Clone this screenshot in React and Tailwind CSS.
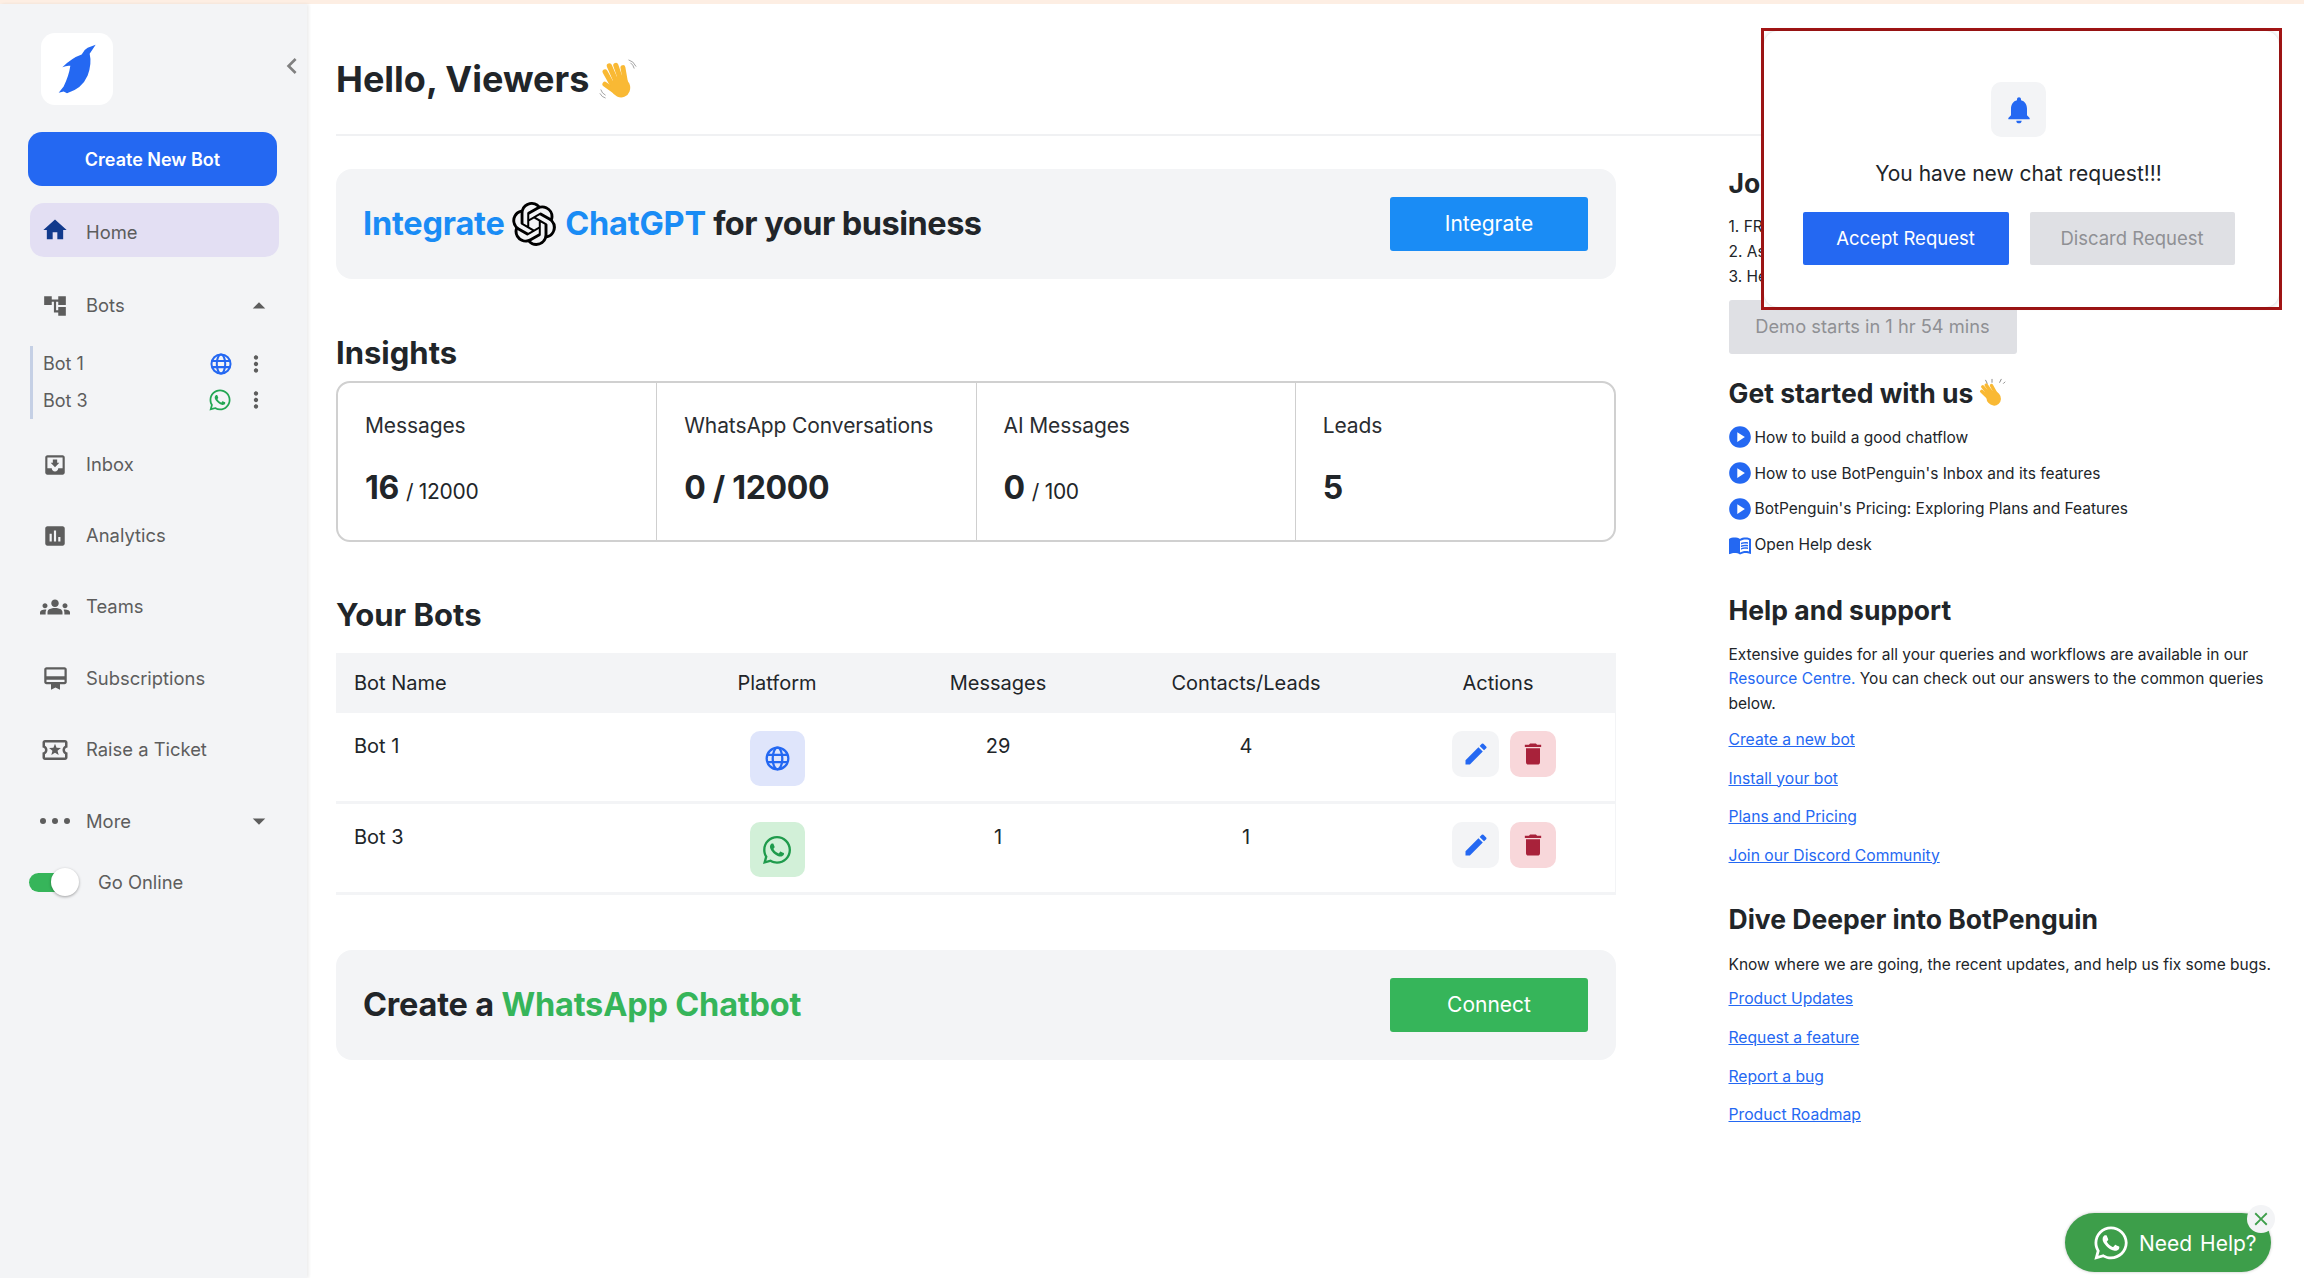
import React from "react";
import { MdHome, MdAccountTree, MdMoveToInbox, MdAssessment, MdGroups, MdCardMembership, MdOutlineLocalActivity, MdArrowDropUp, MdArrowDropDown, MdChevronLeft, MdMoreVert, MdEdit, MdDelete, MdNotifications, MdPlayCircle, MdMenuBook, MdClose } from "react-icons/md";
import { FaWhatsapp } from "react-icons/fa";
import { SiOpenai } from "react-icons/si";

function Globe({ className }) {
  return (
    <svg viewBox="0 0 24 24" fill="none" stroke="currentColor" strokeWidth="2.2" className={className}>
      <circle cx="12" cy="12" r="10.4" />
      <ellipse cx="12" cy="12" rx="4.6" ry="10.4" />
      <path d="M2 8.6 H22 M2 15.4 H22" />
    </svg>
  );
}

function Wave({ className }) {
  return (
    <svg viewBox="0 0 40 44" className={className}>
      <g transform="rotate(-22 20 24)" stroke="#f9b934" strokeLinecap="round" fill="none">
        <path d="M11 10 L13 26" strokeWidth="5.2" />
        <path d="M17.5 6 L18 26" strokeWidth="5.4" />
        <path d="M24 8 L23 26" strokeWidth="5.4" />
        <path d="M30 13 L27 27" strokeWidth="5.2" />
        <path d="M6 22 L13 33" strokeWidth="5.2" />
        <ellipse cx="20" cy="31" rx="10" ry="11" fill="#f9b934" strokeWidth="0" />
      </g>
      <path d="M33 5 Q36 7 37 11 M31 2 Q36 3 39 9 M2 33 Q3 37 7 39 M1 37 Q3 41 7 42" stroke="#888" strokeWidth="0.8" fill="none" />
    </svg>
  );
}

function Clap({ className }) {
  return (
    <svg viewBox="0 0 30 32" className={className}>
      <g transform="rotate(-40 15 18)" stroke="#f9b934" strokeLinecap="round" fill="none">
        <path d="M9 8 L10 18 M13 5 L13 18 M17 6 L16 18 M21 10 L19 20" strokeWidth="3.6" />
        <ellipse cx="14" cy="22" rx="7.5" ry="8" fill="#f9b934" strokeWidth="0" />
      </g>
      <path d="M10 6 L8 2 M15 5 L15 1 M23 5 L25 1 M27 6 L29 4" stroke="#777" strokeWidth="0.9" fill="none" />
    </svg>
  );
}

function NavItem({ icon, label, caret, mt = "mt-[19.4px]" }) {
  return (
    <div className={`flex items-center h-[52px] ${mt} pl-[12px] pr-[14px] ml-[28px] mr-[28px] text-[18.4px] text-[#5d5d5d]`}>
      <span className="w-[30px] flex justify-center text-[#5d5d5d] shrink-0">{icon}</span>
      <span className="ml-[16px] flex-1">{label}</span>
      {caret}
    </div>
  );
}

function SubBot({ name, icon }) {
  return (
    <div className="flex items-center h-[36.5px] pl-[10px]">
      <span className="text-[18px] text-[#5d5d5d] flex-1">{name}</span>
      {icon}
      <MdMoreVert className="text-[26px] text-[#5d5d5d] ml-[11px] mr-[10px]" />
    </div>
  );
}

function Sidebar() {
  return (
    <aside className="relative w-[307px] shrink-0 bg-[#f3f4f6] shadow-[2px_0_3px_rgba(0,0,0,0.07)] flex flex-col">
      <div className="pl-[41px] pt-[29px]">
        <div className="w-[72px] h-[72px] bg-white rounded-[14px] flex items-center justify-center">
          <svg viewBox="170 128 120 155" className="w-[40px] h-[52px]">
            <path fill="#2468f2" d="M286 133 L262 142 Q250 148 244 162 Q215 172 186 200 Q200 194 210 196 Q206 225 190 258 L175 277 L190 273 L200 278 Q245 265 262 225 Q275 190 268 160 Z" />
          </svg>
        </div>
      </div>
      <MdChevronLeft className="absolute left-[276px] top-[46px] text-[32px] text-[#808080]" />
      <button className="mt-[27px] ml-[28px] w-[249px] h-[54px] rounded-[14px] bg-[#2468f2] text-white text-[18px] font-semibold">Create New Bot</button>
      <div className="mt-[17px] ml-[30px] w-[249px] h-[54px] rounded-[14px] bg-[#e3dff3] flex items-center pl-[10px] text-[18.4px] text-[#5d5d5d]">
        <span className="w-[30px] flex justify-center"><MdHome className="text-[28px] text-[#123a8c]" /></span>
        <span className="ml-[16px] pt-[5px]">Home</span>
      </div>
      <NavItem mt="mt-[23px]" icon={<MdAccountTree className="text-[26px]" />} label="Bots" caret={<MdArrowDropUp className="text-[30px] -mr-[9px]" />} />
      <div className="ml-[30px] w-[249px] mt-[13.5px] border-l-[3px] border-[#c5d0e5]">
        <SubBot name="Bot 1" icon={<Globe className="w-[22px] h-[22px] text-[#2468f2]" />} />
        <SubBot name="Bot 3" icon={<FaWhatsapp className="text-[24px] text-[#22a652]" />} />
      </div>
      <NavItem mt="mt-[20px]" icon={<MdMoveToInbox className="text-[26px]" />} label="Inbox" />
      <NavItem icon={<MdAssessment className="text-[26px]" />} label="Analytics" />
      <NavItem icon={<MdGroups className="text-[30px]" />} label="Teams" />
      <NavItem icon={<MdCardMembership className="text-[27px]" />} label="Subscriptions" />
      <NavItem icon={<MdOutlineLocalActivity className="text-[30px]" />} label="Raise a Ticket" />
      <NavItem
        icon={<span className="flex gap-[6px]"><i className="w-[6px] h-[6px] rounded-full bg-[#5d5d5d]" /><i className="w-[6px] h-[6px] rounded-full bg-[#5d5d5d]" /><i className="w-[6px] h-[6px] rounded-full bg-[#5d5d5d]" /></span>}
        label="More"
        caret={<MdArrowDropDown className="text-[30px] -mr-[9px]" />}
      />
      <div className="flex items-center ml-[29px] mt-[20px] h-[30px]">
        <div className="relative w-[48px] h-[19px] rounded-full bg-[#36b55a]">
          <span className="absolute left-[22px] -top-[5px] w-[28px] h-[28px] rounded-full bg-white shadow-[0_1px_3px_rgba(0,0,0,0.35)]" />
        </div>
        <span className="ml-[21px] text-[18.4px] text-[#5d5d5d]">Go Online</span>
      </div>
    </aside>
  );
}

function Stat({ label, big, small, last }) {
  return (
    <div className={`flex-1 pl-[27px] pt-[28px] ${last ? "" : "border-r border-[#cfcfcf]"}`}>
      <div className="text-[21px] text-[#2a2d31] leading-[30px] tracking-[-0.1px]">{label}</div>
      <div className="mt-[27px] leading-[40px] text-[#212529]">
        <span className="text-[32px] font-bold tracking-[-0.3px]">{big}</span>
        {small && <span className="text-[21px] ml-[7px] tracking-[-0.3px]">{small}</span>}
      </div>
    </div>
  );
}

function BotRow({ name, tile, msgs, leads }) {
  const cell = "flex justify-center pt-[18px] text-[20px] text-[#212529] leading-[30px]";
  return (
    <div className="grid grid-cols-[334px_214px_228px_268px_236px] h-[91px] border-b-[3px] border-r border-[#f3f4f6]">
      <div className="pl-[18px] pt-[18px] text-[20px] text-[#212529] leading-[30px]">{name}</div>
      <div className="flex justify-center pt-[18px]">{tile}</div>
      <div className={cell}>{msgs}</div>
      <div className={cell}>{leads}</div>
      <div className="flex gap-[11px] pt-[18px] pl-[72px]">
        <span className="w-[47px] h-[46px] rounded-[10px] bg-[#f3f4f6] flex items-center justify-center"><MdEdit className="text-[28px] text-[#2468f2]" /></span>
        <span className="w-[46px] h-[46px] rounded-[10px] bg-[#f8d7da] flex items-center justify-center"><MdDelete className="text-[28px] text-[#a8223a]" /></span>
      </div>
    </div>
  );
}

function Banner({ children, button, color, mt }) {
  return (
    <div className={`h-[110px] rounded-[16px] bg-[#f3f4f6] flex items-center justify-between pl-[27px] pr-[28px] ${mt}`}>
      <div className="flex items-center text-[32.5px] font-bold text-[#212529] whitespace-pre tracking-[-0.2px]">{children}</div>
      <button className={`w-[198px] h-[54px] rounded-[3px] text-white text-[21px] ${color}`}>{button}</button>
    </div>
  );
}

function Content() {
  return (
    <div className="w-[1280px]">
      <Banner button="Integrate" color="bg-[#1a8cf5]" mt="mt-[33px]">
        <span className="text-[#1a8cf5]">Integrate </span>
        <SiOpenai className="text-[44px] text-black mr-[9px]" />
        <span className="text-[#1a8cf5]">ChatGPT</span>
        <span className="tracking-[-0.5px]"> for your business</span>
      </Banner>
      <h2 className="mt-[54px] text-[31px] font-bold text-[#212529] leading-[40px]">Insights</h2>
      <div className="mt-[8px] h-[161px] border-2 border-[#d0d0d0] rounded-[14px] flex">
        <Stat label="Messages" big="16" small="/ 12000" />
        <Stat label="WhatsApp Conversations" big="0 / 12000" />
        <Stat label="AI Messages" big="0" small="/ 100" />
        <Stat label="Leads" big="5" last />
      </div>
      <h2 className="mt-[53px] text-[31px] font-bold text-[#212529] leading-[40px]">Your Bots</h2>
      <div className="mt-[18px]">
        <div className="grid grid-cols-[334px_214px_228px_268px_236px] h-[60px] items-center bg-[#f3f4f6] text-[20px] text-[#212529]">
          <div className="pl-[18px]">Bot Name</div>
          <div className="text-center">Platform</div>
          <div className="text-center">Messages</div>
          <div className="text-center">Contacts/Leads</div>
          <div className="text-center">Actions</div>
        </div>
        <BotRow
          name="Bot 1"
          msgs="29"
          leads="4"
          tile={<span className="w-[55px] h-[55px] rounded-[10px] bg-[#dfe5fb] flex items-center justify-center"><Globe className="w-[25px] h-[25px] text-[#2468f2]" /></span>}
        />
        <BotRow
          name="Bot 3"
          msgs="1"
          leads="1"
          tile={<span className="w-[55px] h-[55px] rounded-[10px] bg-[#d2f0d8] flex items-center justify-center"><FaWhatsapp className="text-[32px] text-[#1f9b4c]" /></span>}
        />
      </div>
      <Banner button="Connect" color="bg-[#36b55a]" mt="mt-[55px]">
        <span>Create a </span>
        <span className="text-[#36b55a]">WhatsApp Chatbot</span>
      </Banner>
    </div>
  );
}

function GetItem({ icon, text }) {
  return (
    <div className="flex items-center h-[35.75px] text-[15.5px] text-[#212529]">
      <span className="w-[26px] flex justify-start -ml-[2px] mr-[2px]">{icon}</span>
      <span>{text}</span>
    </div>
  );
}

function TextLink({ children }) {
  return <a className="block h-[38.6px] leading-[38px] text-[15.7px] text-[#2468f2] underline">{children}</a>;
}

const heading = "text-[26.5px] font-bold text-[#212529] leading-[36px]";

function RightCol() {
  return (
    <div className="w-[555px] ml-[112.5px] shrink-0">
      <h3 className={`mt-[29px] ${heading}`}>Join our live demo</h3>
      <div className="mt-[12.5px] text-[15.5px] text-[#212529] leading-[25px]">
        <div>1. FREE onboarding session</div>
        <div>2. Ask anything about the product</div>
        <div>3. Hear from our experts</div>
      </div>
      <button className="mt-[11.5px] w-[288px] h-[54px] rounded-[3px] bg-[#dfe0e4] text-[#8f9094] text-[18.3px]">Demo starts in 1 hr 54 mins</button>
      <h3 className={`mt-[21px] flex items-center ${heading}`}>Get started with us <Clap className="w-[30px] h-[30px] ml-[4px]" /></h3>
      <div className="mt-[8.5px]">
        <GetItem icon={<MdPlayCircle className="text-[26px] text-[#2468f2]" />} text="How to build a good chatflow" />
        <GetItem icon={<MdPlayCircle className="text-[26px] text-[#2468f2]" />} text="How to use BotPenguin's Inbox and its features" />
        <GetItem icon={<MdPlayCircle className="text-[26px] text-[#2468f2]" />} text="BotPenguin's Pricing: Exploring Plans and Features" />
        <GetItem icon={<MdMenuBook className="text-[24px] text-[#2468f2] ml-[1px]" />} text="Open Help desk" />
      </div>
      <h3 className={`mt-[29px] ${heading}`}>Help and support</h3>
      <p className="mt-[15px] text-[15.5px] text-[#212529] leading-[24.5px]">
        Extensive guides for all your queries and workflows are available in our <span className="text-[#2468f2]">Resource Centre.</span> You can check out our answers to the common queries below.
      </p>
      <div className="mt-[5px]">
        <TextLink>Create a new bot</TextLink>
        <TextLink>Install your bot</TextLink>
        <TextLink>Plans and Pricing</TextLink>
        <TextLink>Join our Discord Community</TextLink>
      </div>
      <h3 className={`mt-[26px] ${heading}`}>Dive Deeper into BotPenguin</h3>
      <p className="mt-[16px] text-[15.5px] text-[#212529] leading-[24px] whitespace-nowrap">Know where we are going, the recent updates, and help us fix some bugs.</p>
      <div className="mt-[3px]">
        <TextLink>Product Updates</TextLink>
        <TextLink>Request a feature</TextLink>
        <TextLink>Report a bug</TextLink>
        <TextLink>Product Roadmap</TextLink>
      </div>
    </div>
  );
}

export default function App() {
  return (
    <div className="relative w-[2304px] h-[1278px] overflow-hidden bg-white font-[Inter,sans-serif] flex flex-col">
      <div className="h-[4px] bg-[#fdeee3] shrink-0" />
      <div className="flex flex-1 min-h-0">
        <Sidebar />
        <main className="pl-[29px] flex-1 min-w-0">
          <div className="h-[132px] border-b-2 border-[#f0f1f3] w-[1930px] flex items-center pt-[20px]">
            <h1 className="text-[36px] font-bold text-[#212529]">Hello, Viewers</h1>
            <Wave className="w-[42px] h-[42px] ml-[8px]" />
          </div>
          <div className="flex">
            <Content />
            <RightCol />
          </div>
        </main>
      </div>

      <div className="absolute left-[1761px] top-[28px] w-[521px] h-[282px] border-[3px] border-[#a31515] bg-white">
        <div className="h-full rounded-[14px] shadow-[0_0_4px_rgba(0,0,0,0.18)] flex flex-col items-center pt-[51px] pr-[6px]">
          <span className="w-[55px] h-[55px] rounded-[10px] bg-[#f3f4f6] flex items-center justify-center">
            <MdNotifications className="text-[32px] text-[#2468f2]" />
          </span>
          <p className="mt-[23px] text-[21px] text-[#212529] leading-[28px]">You have new chat request!!!</p>
          <div className="mt-[24px] flex gap-[21px]">
            <button className="w-[206px] h-[53px] rounded-[2px] bg-[#2468f2] text-white text-[18.5px]">Accept Request</button>
            <button className="w-[205px] h-[53px] rounded-[2px] bg-[#dfe0e4] text-[#8f9094] text-[18.5px]">Discard Request</button>
          </div>
        </div>
      </div>

      <div className="absolute left-[2065px] top-[1213px] w-[206px] h-[59px] rounded-full bg-[#3d9e4a] shadow-[0_0_3px_rgba(0,0,0,0.25)] flex items-center pl-[27px] text-white">
        <FaWhatsapp className="text-[38px]" />
        <span className="ml-[9px] pt-[2px] text-[21px] whitespace-nowrap [word-spacing:2px]">Need Help?</span>
      </div>
      <span className="absolute left-[2247px] top-[1205px] w-[28px] h-[28px] rounded-full bg-[#f3f4f6] flex items-center justify-center">
        <MdClose className="text-[22px] text-[#3d9e4a]" />
      </span>
    </div>
  );
}
